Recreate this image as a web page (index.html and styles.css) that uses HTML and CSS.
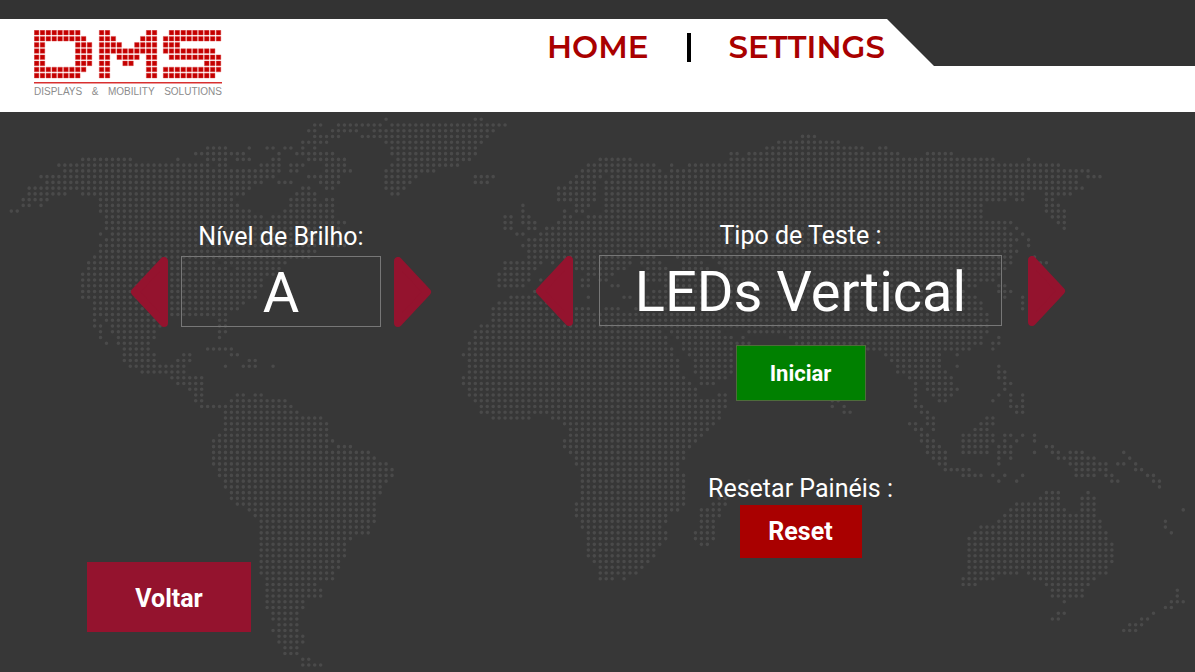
FILE: index.html
```html
<!DOCTYPE html>
<html lang="pt">
<head>
<meta charset="utf-8">
<meta name="viewport" content="width=device-width, initial-scale=1">
<title>DMS - Settings</title>
<link rel="stylesheet" href="styles.css">
</head>
<body>
<header class="header">
  <div class="logo">
    <svg class="logo-mark" viewBox="0 0 188 54" role="img" aria-label="DMS"><path id="logo-dots" class="logo-dots"/><path class="logo-rule" d="M0 52.7H188"/></svg>
    <div class="logo-tagline"><span>DISPLAYS</span><span>&amp;</span><span>MOBILITY</span><span>SOLUTIONS</span></div>
  </div>
  <nav class="nav">
    <a class="nav-link" href="#home">HOME</a>
    <span class="nav-divider"></span>
    <a class="nav-link" href="#settings">SETTINGS</a>
  </nav>
  <div class="header-corner"></div>
</header>
<main class="main">
  <svg class="map" viewBox="0 0 1195 560" preserveAspectRatio="xMidYMin slice" aria-hidden="true"><path id="map-dots" class="map-dots"/></svg>
  <div class="controls">
    <section class="group group-level">
      <label class="label" for="level">Nível de Brilho:</label>
      <div class="picker picker-level">
        <button class="arrow" aria-label="Diminuir brilho"><svg viewBox="0 0 39 70"><path d="M34 4V66L5 35Z"/></svg></button>
        <input class="value" id="level" type="text" value="A" readonly>
        <button class="arrow" aria-label="Aumentar brilho"><svg viewBox="0 0 39 70"><path d="M5 4V66L34 35Z"/></svg></button>
      </div>
    </section>
    <section class="group group-test">
      <label class="label" for="test">Tipo de Teste :</label>
      <div class="picker picker-test">
        <button class="arrow" aria-label="Teste anterior"><svg viewBox="0 0 39 70"><path d="M34 4V66L5 35Z"/></svg></button>
        <input class="value" id="test" type="text" value="LEDs Vertical" readonly>
        <button class="arrow" aria-label="Próximo teste"><svg viewBox="0 0 39 70"><path d="M5 4V66L34 35Z"/></svg></button>
      </div>
      <button class="button button-start">Iniciar</button>
      <span class="label label-reset" id="reset-label">Resetar Painéis :</span>
      <button class="button button-reset" aria-describedby="reset-label">Reset</button>
    </section>
  </div>
  <button class="button button-back">Voltar</button>
</main>
<script src="dots.js"></script>
</body>
</html>
```
FILE: styles.css
```css
* {
  box-sizing: border-box;
}

body {
  margin: 0;
  min-height: 100vh;
  display: flex;
  flex-direction: column;
  background: #373737;
  color: #fff;
  font-family: Roboto, "Liberation Sans", sans-serif;
}

button {
  border: 0;
  padding: 0;
  color: inherit;
  font-family: inherit;
  cursor: pointer;
}

.header {
  position: relative;
  display: flex;
  align-items: flex-start;
  min-height: 112px;
  padding: 11px 34px 0;
  border-top: 19px solid #333;
  background: #fff;
}

.logo {
  width: 188px;
}

.logo-mark {
  display: block;
  width: 100%;
}

.logo-dots {
  fill: #c40000;
  stroke: #d84040;
  stroke-width: 0.4;
}

.logo-rule {
  stroke: #d83030;
  stroke-width: 1.4;
}

.logo-tagline {
  display: flex;
  justify-content: space-between;
  color: #8c8c8c;
  font: 10px/16px "Liberation Sans", sans-serif;
}

.nav {
  display: flex;
  align-items: center;
  gap: 38px;
  margin-left: 325px;
}

.nav-link {
  color: #a90000;
  font: 600 31px/34px Montserrat, Inter, sans-serif;
  text-decoration: none;
}

.nav-divider {
  width: 4px;
  height: 29px;
  background: #000;
}

.header-corner {
  position: absolute;
  top: -1px;
  right: 0;
  width: 309px;
  height: 48px;
  background: #333;
  clip-path: polygon(0 0, 100% 0, 100% 100%, 48px 100%);
}

.main {
  position: relative;
  flex: 1;
  padding: 108px 0 40px;
}

.map {
  position: absolute;
  inset: 0;
  width: 100%;
  height: 100%;
}

.map-dots {
  fill: #4a4a4a;
}

.controls {
  position: relative;
  display: flex;
  justify-content: space-between;
  padding: 0 129px 0 130px;
}

.group {
  display: flex;
  flex-direction: column;
  align-items: center;
}

.group-level {
  padding-top: 1px;
}

.label {
  font-size: 25px;
  line-height: 32px;
  margin-bottom: 3px;
}

.picker {
  display: flex;
  align-items: center;
}

.picker-level {
  gap: 12px;
}

.picker-test {
  gap: 25px;
}

.arrow {
  width: 39px;
  height: 70px;
  background: none;
}

.arrow svg {
  display: block;
  width: 100%;
}

.arrow path {
  fill: #94132e;
  stroke: #94132e;
  stroke-width: 8;
  stroke-linejoin: round;
}

.value {
  width: 200px;
  height: 71px;
  padding: 2px 0 0;
  border: 1px solid #777;
  background: transparent;
  color: #fff;
  font: 56px/66px Roboto, "Liberation Sans", sans-serif;
  text-align: center;
}

.picker-test .value {
  width: 403px;
}

.button {
  position: relative;
  font-size: 25px;
  font-weight: 700;
}

.button-start {
  width: 130px;
  height: 56px;
  margin-top: 19px;
  border: 1px solid #4f6b3c;
  background: #008000;
  font-size: 22px;
}

.label-reset {
  margin-top: 72px;
  margin-bottom: 0;
}

.button-reset {
  width: 122px;
  height: 53px;
  background: #a90000;
}

.button-back {
  width: 164px;
  height: 70px;
  padding-top: 2px;
  margin: 4px 0 0 87px;
  background: #94132e;
}
```
FILE: dots.js
```js
// Each line is one row of the map; each item is a column or a span of columns.
const mapRows = `63 78-79
51-52 55-62 64-83
50-51 54-58 61-81
51-55 59-80 133-135
49-53 63-79 129-139
33-36 40 43-44 46-47 49 51 64-78 127-143 146-147
31-39 45 48-49 50-54 64-78 121-122 124-149 154-158
12-20 28 33-36 38-40 44-45 50-56 65-77 99-104 121-165 171
8-33 35-36 42-45 47-49 53-56 64-75 97-108 111 114-176
9-45 47-48 53-57 63-71 96-109 111-181
5-44 50-55 63-68 78-81 95-99 101-179 181-183
6-42 45-47 52-55 63-67 78-80 94-98 100-179
3-40 49-50 53-54 63-66 92-98 100-180
3-9 12-39 48-51 64-65 92-98 100-170 174-178
2-6 15-37 47-51 53-54 92-98 100-167 169-170 174-175
2-3 5 15-38 47-54 86 95-97 100-163 174-176
0-1 15-40 46-54 86 93 95-96 100-163 174-177
16-42 44-54 83-84 86-87 93-94 97-163 175-177
16-56 83-84 86-88 92-168 176-177
16-55 83-84 87-88 90-167 169 177
15 17-52 85-86 89-168 170
16-53 87-169 171
15-51 54-56 86-168 171
15-51 87-105 107-108 111-169
14-50 87-104 106-108 112-115 118-168 172
13-34 36-46 83-89 91 93-104 106-109 113-116 119-168 172-174
13-36 38-45 83-88 92 95-103 107-110 113-117 120-167
12-44 82-87 97-101 107-110 114-166
12-42 82-87 89 96-97 99-100 107-165
12-42 82-86 96-97 101-102 110-159 161-162 166-167
12-41 88 108-160 166-168
12-41 84-88 97 103-104 107-162 167 170
14-39 82-90 107-163 170
14-38 81-90 95-97 100-102 105-163 170
14-36 81-164
14 16-26 35-36 81-164
14-15 17-25 35-36 79-164
15 17-24 35-36 78-109 111-119 124-164
15 18-24 35 78-110 112-121 123 131-163 166
16 18-23 77-110 113-124 132-163 165-166
19-23 33-37 77-111 113-121 144-161 165
19-24 29-30 37-38 76-111 114-121 147-156 159
19-24 28-30 40-41 77-112 115-121 148-156
20-29 36 39-41 44 77-112 115-121 149-156 159 166
22-29 77-112 115-121 149-157 166-167
27-32 76-113 116-120 151-158 166-167
28-32 76-114 116-118 152 154-158 167-168
30-32 77-115 152 154-159 167
31-32 38-39 41-42 77-115 119-120 152 155-158 166 168 170
31-32 37-46 78-120 138-139 152 156-157 165 168 170
32-47 79-120 138 140 152-153 168-170
36-48 79-119 140-141 153-154 169-170
36-52 81-87 91-119 154-155 164-165
36-53 93-118 151-152 154-155 163-165
36-53 94-117 152-153 155 162-164
35-53 94-116 153-154 160-165 167-168 170 172
34-54 93-115 153-155 160-165 167 169 172
34-53 55-57 93-114 154-156 160-164 166-168 174-175
34-60 94-113 154-157 160-164 166-168 172 175-176 178-180 187
34-61 95-113 155-157 166 168 176-182 188
34-63 95-112 156-157 166 178-184 186-187 189
35-64 96-112 157-161 179-184 189-190
35-64 96-113 160-163 165 167 170 179-182 184-185 191-192
36-63 96-113 124 166 169 185-186 192-193
36-62 96-113 193
37-62 96-113 174-176 181
37-61 96-113 119-120 173-176 180-182
38-61 95-113 118-120 169-176 180-182
40-61 95-112 116-119 168-177 180-182 197
41-61 95-110 116-119 167-182
42-61 96-110 116-118 166-183 194
42-60 96-109 116-118 163-183 194
42-60 97-110 115-118 162-184 195
42-57 97-110 115-118 161-184
42-56 97-109 116-117 161-185
42-56 97-108 161-185
42-56 97-108 161-185
42-55 98-107 161-185
42-55 99-106 161-184
42-54 99-105 161-169 171-184
43-54 99-101 103 160-165 172-182
43-51 160-162 174-181
43-52 175-180 196
43-52 175-180 196
43-49 177 195-197
43-49 194-195
44-48 176-177 192
44-48 175-176 190-191
45-48 188-190
44-48 187-189
45-49
45-49
46-48
46-48
49-50
49-52`;

const logoLetters = [
  { x: 0, rows: "0-7,0-8,0-1 7-9,0-1 7-9,0-1 7-9,0-1 7-9,0-8,0-7" },
  { x: 65, rows: "0-1 8-9,0-2 7-9,0-3 6-9,0-9,0-1 3-6 8-9,0-1 4-5 8-9,0-1 8-9,0-1 8-9" },
  { x: 129, rows: "1-9,0-9,0-2,0-8,1-9,7-9,0-9,0-8" }
];

function cells(rows, draw) {
  return rows.map((row, r) => row.split(" ").map(span => {
    const [from, to = from] = span.split("-").map(Number);
    let d = "";
    for (let c = from; c <= to; c++) d += draw(c, r);
    return d;
  }).join("")).join("");
}

document.getElementById("map-dots").setAttribute("d", cells(mapRows.split("\n"), (c, r) =>
  `M${(9.5 + 5.949 * c).toFixed(2)} ${(7.2 + 5.745 * r).toFixed(2)}a1.8 1.8 0 1 1 3.6 0a1.8 1.8 0 1 1-3.6 0z`));

document.getElementById("logo-dots").setAttribute("d", logoLetters.map(letter =>
  cells(letter.rows.split(","), (c, r) =>
    `M${(letter.x + 0.3 + 5.88 * c).toFixed(2)} ${(0.3 + 6.15 * r).toFixed(2)}h4.6v4.6h-4.6z`)).join(""));
```
